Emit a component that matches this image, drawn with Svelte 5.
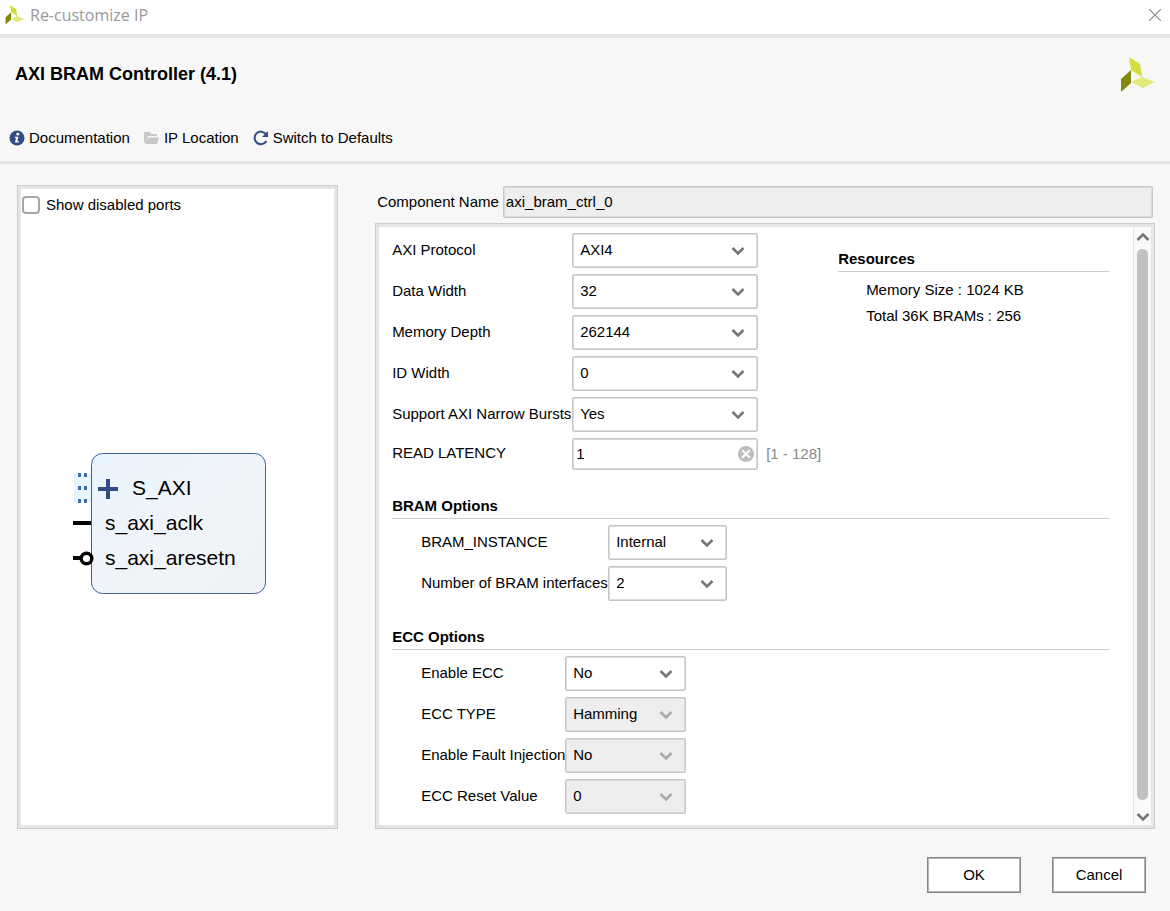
<script>
    let showDisabled = $state(false);
    let componentName = $state('axi_bram_ctrl_0');
    let readLatency = $state('1');

    const axiFields = [
        { id: 'protocol', label: 'AXI Protocol', options: ['AXI4', 'AXI4LITE'] },
        { id: 'data-width', label: 'Data Width', options: ['32', '64', '128', '256'] },
        { id: 'depth', label: 'Memory Depth', options: ['262144', '131072', '65536'] },
        { id: 'id-width', label: 'ID Width', options: ['0', '1', '2'] },
        { id: 'narrow', label: 'Support AXI Narrow Bursts', options: ['Yes', 'No'] },
    ];

    const bramFields = [
        { id: 'instance', label: 'BRAM_INSTANCE', options: ['Internal', 'External'] },
        { id: 'interfaces', label: 'Number of BRAM interfaces', options: ['2', '1'] },
    ];

    const eccFields = [
        { id: 'ecc', label: 'Enable ECC', options: ['No', 'Yes'] },
        { id: 'ecc-type', label: 'ECC TYPE', options: ['Hamming', 'Hsiao'], disabled: true },
        { id: 'fault', label: 'Enable Fault Injection', options: ['No', 'Yes'], disabled: true },
        { id: 'reset', label: 'ECC Reset Value', options: ['0', '1'], disabled: true },
    ];
</script>

{#snippet logo(size)}
    <svg width={size} height={size} viewBox="0 0 36 36" aria-hidden="true">
        <path d="M9 0 20 7 22 20 11 13Z" fill="#d3de3b" />
        <path d="M1 22 11 13V26L1 35Z" fill="#83890b" />
        <path d="M11 25 22 20 35 25 23 31Z" fill="#e3ea7c" />
    </svg>
{/snippet}

{#snippet row(field)}
    <label for={field.id}>{field.label}</label>
    <div class="select">
        <select id={field.id} disabled={field.disabled}>
            {#each field.options as option}
                <option>{option}</option>
            {/each}
        </select>
        <svg class="arrow" width="14" height="10" viewBox="0 0 14 10" aria-hidden="true">
            <path d="M1.5 2 7 7.5 12.5 2" fill="none" stroke="currentColor" stroke-width="2.6" />
        </svg>
    </div>
{/snippet}

<div class="dialog">
    <div class="titlebar">
        {@render logo(20)}
        <span>Re-customize IP</span>
        <button class="close" aria-label="Close">
            <svg width="12" height="12" viewBox="0 0 12 12">
                <path d="M0 0 12 12M12 0 0 12" stroke="#8a8a8a" stroke-width="1.2" />
            </svg>
        </button>
    </div>

    <header>
        <div class="heading">
            <h1>AXI BRAM Controller (4.1)</h1>
            {@render logo(36)}
        </div>
        <nav class="toolbar">
            <button>
                <svg width="16" height="16" viewBox="0 0 16 16">
                    <circle cx="8" cy="8" r="7.5" fill="#324d85" />
                    <circle cx="8.8" cy="4.2" r="1.4" fill="#fff" />
                    <path d="M6 6.8H9.4L8.4 11.2H9.8V12.4H6L7 8H6Z" fill="#fff" />
                </svg>
                Documentation
            </button>
            <button>
                <svg width="16" height="16" viewBox="0 0 16 16">
                    <path d="M0 13V2H6L7 4H13V6H4L2 12Z" fill="#c8c8c8" />
                    <path d="M4 7.5H15L13 14H1Z" fill="#c8c8c8" />
                </svg>
                IP Location
            </button>
            <button>
                <svg width="16" height="16" viewBox="0 0 16 16">
                    <path d="M13 4.2A6.3 6.3 0 1 0 13.4 11" fill="none" stroke="#324d85" stroke-width="2" />
                    <path d="M15 1V7H9Z" fill="#324d85" />
                </svg>
                Switch to Defaults
            </button>
        </nav>
    </header>

    <main>
        <section class="panel ports">
            <label class="check">
                <input type="checkbox" bind:checked={showDisabled} />
                Show disabled ports
            </label>
            <div class="diagram">
                <svg width="209" height="142" viewBox="0 0 209 142">
                    <defs>
                        <linearGradient id="block" x1="0" y1="0" x2="1" y2="1">
                            <stop offset="0" stop-color="#eaf4fe" />
                            <stop offset="0.6" stop-color="#f0f4f8" />
                            <stop offset="1" stop-color="#f0f3f6" />
                        </linearGradient>
                    </defs>
                    <rect x="1" y="21" width="17" height="28" fill="#eaf4fe" />
                    <path d="M5 20h3v4h-3zM11 20h3v4h-3zM5 33h3v4h-3zM11 33h3v4h-3zM5 46h3v4h-3zM11 46h3v4h-3z" fill="#3d6ea5" />
                    <rect x="18.5" y="0.5" width="174" height="140" rx="11" fill="url(#block)" stroke="#3f5f9f" />
                    <path d="M25 36H45M35 26V46" stroke="#324d85" stroke-width="4" />
                    <path d="M0 70H18M0 105H9" stroke="#000" stroke-width="4" />
                    <circle cx="13.5" cy="105.5" r="5.3" fill="#fff" stroke="#000" stroke-width="3.4" />
                    <text x="59" y="42">S_AXI</text>
                    <text x="32" y="77">s_axi_aclk</text>
                    <text x="32" y="112">s_axi_aresetn</text>
                </svg>
            </div>
        </section>

        <section class="config">
            <div class="name">
                <label for="component">Component Name</label>
                <input id="component" type="text" readonly bind:value={componentName} />
            </div>

            <div class="panel options">
                <div class="content">
                    <div class="top">
                        <div class="fields axi">
                            {#each axiFields as field}
                                {@render row(field)}
                            {/each}
                            <label for="latency">READ LATENCY</label>
                            <div class="latency">
                                <input id="latency" type="text" bind:value={readLatency} />
                                <button class="clear" aria-label="Clear" onclick={() => (readLatency = '')}>
                                    <svg width="16" height="16" viewBox="0 0 16 16">
                                        <circle cx="8" cy="8" r="8" fill="#bdbdbd" />
                                        <path d="M4.2 4.2 11.8 11.8M11.8 4.2 4.2 11.8" stroke="#fff" stroke-width="2" />
                                    </svg>
                                </button>
                                <span class="range">[1 - 128]</span>
                            </div>
                        </div>
                        <div class="resources">
                            <h2>Resources</h2>
                            <p>Memory Size : 1024 KB</p>
                            <p>Total 36K BRAMs : 256</p>
                        </div>
                    </div>

                    <h2>BRAM Options</h2>
                    <div class="fields bram">
                        {#each bramFields as field}
                            {@render row(field)}
                        {/each}
                    </div>

                    <h2>ECC Options</h2>
                    <div class="fields ecc">
                        {#each eccFields as field}
                            {@render row(field)}
                        {/each}
                    </div>
                </div>
                <div class="scrollbar">
                    <svg width="14" height="10" viewBox="0 0 14 10">
                        <path d="M1.5 8 7 2.5 12.5 8" fill="none" stroke="#777" stroke-width="2.6" />
                    </svg>
                    <div class="thumb"></div>
                    <svg width="14" height="10" viewBox="0 0 14 10">
                        <path d="M1.5 2 7 7.5 12.5 2" fill="none" stroke="#777" stroke-width="2.6" />
                    </svg>
                </div>
            </div>
        </section>
    </main>

    <footer>
        <button>OK</button>
        <button>Cancel</button>
    </footer>
</div>

<style>
    :global(body) {
        margin: 0;
    }

    .dialog {
        display: flex;
        flex-direction: column;
        min-height: 100vh;
        background: #f7f7f7;
        color: #000;
        font: 15px/18px "Liberation Sans", Arial, sans-serif;
    }

    .dialog * {
        box-sizing: border-box;
    }

    button, input, select {
        font: inherit;
        color: inherit;
        margin: 0;
    }

    svg {
        display: block;
        flex: none;
    }

    .titlebar {
        display: flex;
        align-items: center;
        height: 38px;
        padding: 0 9px 4px 5px;
        gap: 5px;
        background: #fff;
        border-bottom: 4px solid #e5e5e5;
        color: #999;
        font: 16px/20px "Open Sans", "Noto Sans", sans-serif;
    }

    .close {
        margin-left: auto;
        padding: 0;
        border: none;
        background: none;
    }

    header {
        height: 126px;
        padding: 19px 14px 0 15px;
        border-bottom: 3px solid #e5e5e5;
    }

    .heading {
        display: flex;
        justify-content: space-between;
    }

    h1 {
        margin: 0;
        font-size: 18px;
        line-height: 34px;
    }

    .toolbar {
        display: flex;
        gap: 14px;
        margin: 36px 0 0 -6px;
    }

    .toolbar button {
        display: flex;
        align-items: center;
        gap: 4px;
        padding: 0;
        border: none;
        background: none;
    }

    main {
        flex: 1;
        display: grid;
        grid-template-columns: 7fr 17fr;
        gap: 37px;
        padding: 21px 15px 0 17px;
    }

    .panel {
        background: #fff;
        border: 1px solid #ccc;
        box-shadow: inset 0 0 0 3px #e5e5e5;
        padding: 3px;
    }

    .ports {
        display: flex;
        flex-direction: column;
    }

    .check {
        display: flex;
        align-items: center;
        gap: 6px;
        height: 32px;
        margin-bottom: 2px;
        padding-left: 1px;
    }

    .check input {
        appearance: none;
        width: 18px;
        height: 18px;
        border: 2px solid #a6a6a6;
        border-radius: 4px;
        background: #fff;
    }

    .check input:checked {
        background: #324d85;
    }

    .diagram {
        flex: 1;
        display: flex;
        align-items: center;
        justify-content: center;
    }

    .diagram text {
        font-size: 21px;
    }

    .config {
        display: flex;
        flex-direction: column;
        gap: 5px;
    }

    .name {
        display: flex;
        align-items: center;
        gap: 4px;
        padding: 1px 2px 0;
    }

    .name input {
        flex: 1;
        height: 32px;
        padding: 0 2px 2px;
        border: 1px solid #c6c6c6;
        border-radius: 2px;
        box-shadow: inset 0 0 0 1px #dadada;
        background: #eee;
    }

    .options {
        flex: 1;
        display: flex;
    }

    .content {
        flex: 1;
        padding: 6px 24px 11px 13px;
    }

    .top {
        display: flex;
        gap: 80px;
    }

    .fields {
        display: grid;
        gap: 6px;
        align-items: center;
        justify-content: start;
        white-space: nowrap;
    }

    .fields label {
        padding-bottom: 2px;
    }

    .axi {
        grid-template-columns: 174px 186px;
    }

    .bram {
        grid-template-columns: 181px 119px;
    }

    .ecc {
        grid-template-columns: 138px 121px;
    }

    .bram, .ecc {
        margin: 6px 0 0 29px;
    }

    .select {
        position: relative;
    }

    select {
        display: block;
        appearance: none;
        width: 100%;
        height: 35px;
        padding: 0 30px 2px 7px;
        border: 1px solid #c6c6c6;
        border-radius: 2px;
        box-shadow: inset 0 0 0 1px #dadada;
        background: #fff;
    }

    select:disabled {
        background: #eee;
        opacity: 1;
    }

    .arrow {
        position: absolute;
        top: 13px;
        right: 13px;
        color: #777;
        pointer-events: none;
    }

    select:disabled + .arrow {
        color: #aaa;
    }

    .latency {
        position: relative;
    }

    .latency input {
        display: block;
        width: 100%;
        height: 32px;
        padding: 0 26px 2px 3px;
        border: 1px solid #c6c6c6;
        border-radius: 2px;
        box-shadow: inset 0 0 0 1px #dadada;
        background: #fff;
    }

    .clear {
        position: absolute;
        top: 8px;
        right: 4px;
        padding: 0;
        border: none;
        background: none;
    }

    .range {
        position: absolute;
        top: 7px;
        left: 100%;
        margin-left: 8px;
        color: #888;
    }

    h2 {
        margin: 26px 0 0;
        padding-bottom: 2px;
        border-bottom: 1px solid #ccc;
        font-size: 15px;
        line-height: 20px;
    }

    .resources {
        flex: 1;
    }

    .resources h2 {
        margin: 16px 0 5px;
    }

    .resources p {
        margin: 0 0 0 28px;
        line-height: 26px;
    }

    .scrollbar {
        display: flex;
        flex-direction: column;
        align-items: center;
        width: 18px;
        padding: 5px 0 3px;
        background: #fafafa;
        border-left: 1px solid #e5e5e5;
    }

    .thumb {
        flex: 1;
        width: 11px;
        margin: 7px 0 12px;
        border-radius: 5px;
        background: #c1c1c1;
    }

    footer {
        display: flex;
        justify-content: flex-end;
        gap: 31px;
        padding: 28px 24px 18px;
    }

    footer button {
        width: 94px;
        height: 36px;
        padding: 0;
        border: 1px solid #868686;
        box-shadow: inset 0 0 0 1px #b4b4b4;
        background: #fff;
    }
</style>
